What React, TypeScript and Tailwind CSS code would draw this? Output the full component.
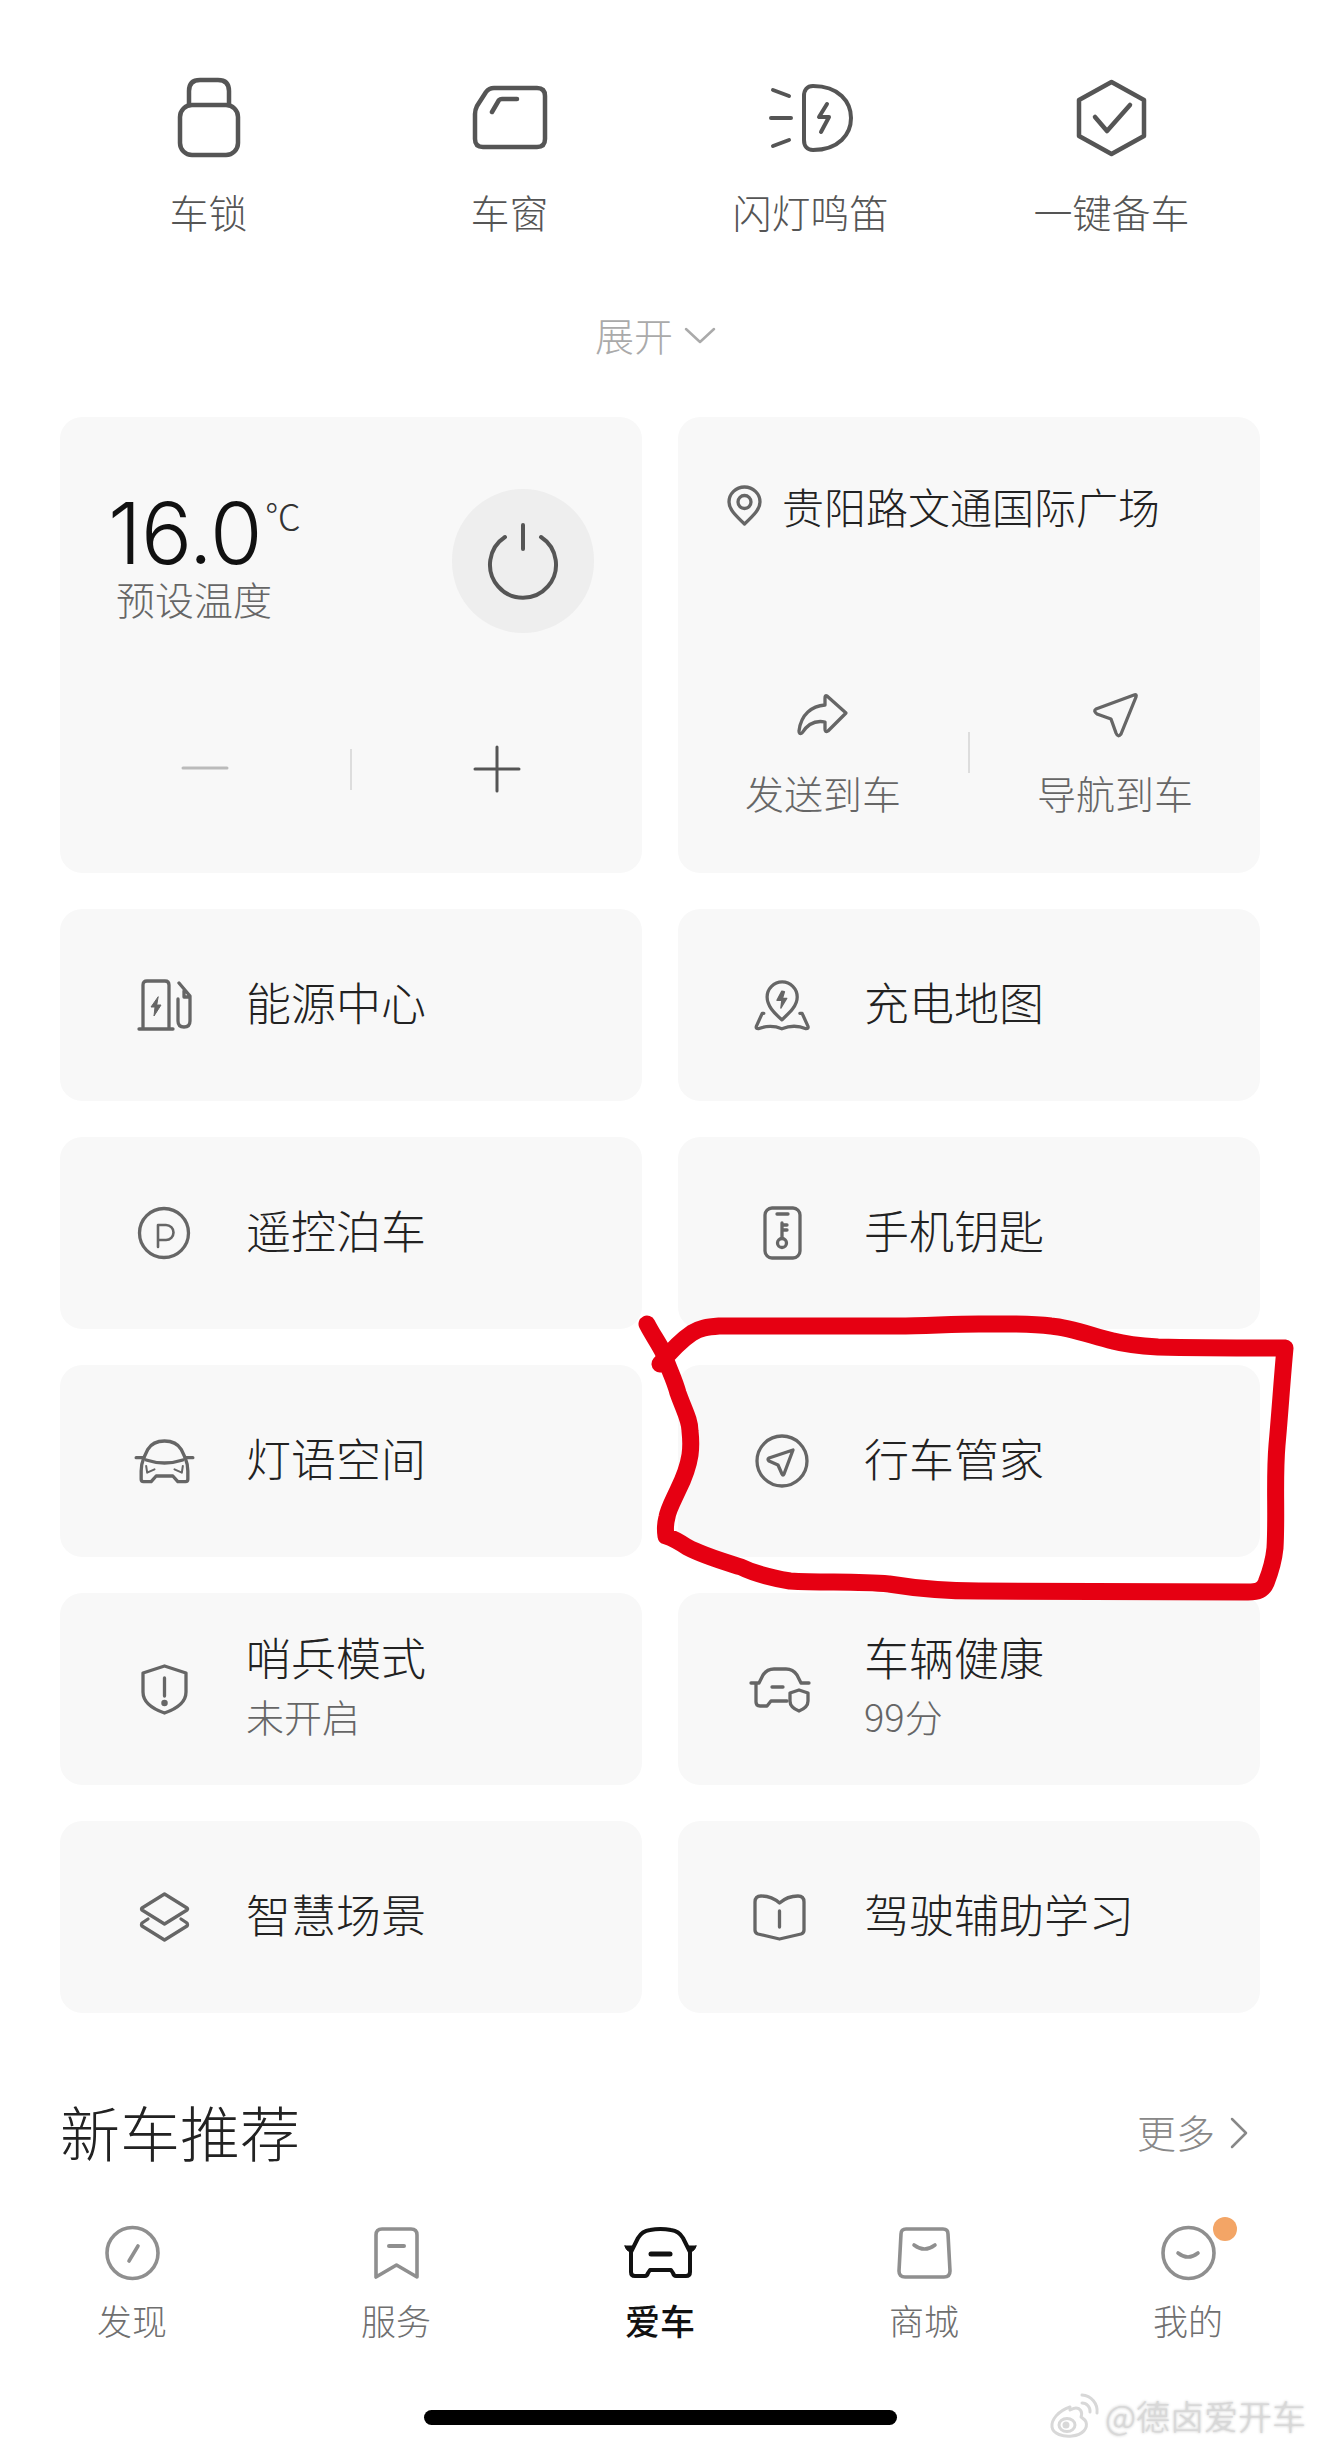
import type { ReactNode } from "react";

const Ico = ({ w, h, sw = 3.3, vb, children }: { w: number; h: number; sw?: number; vb?: string; children: ReactNode }) => (
  <svg
    width={w}
    height={h}
    viewBox={vb ?? `0 0 ${w} ${h}`}
    fill="none"
    stroke="currentColor"
    strokeWidth={sw}
    strokeLinecap="round"
    strokeLinejoin="round"
    className="block shrink-0 overflow-visible"
  >
    {children}
  </svg>
);

// --- top quick actions ---
const quick = [
  {
    label: "车锁",
    icon: (
      <Ico w={62} h={79} sw={4.5}>
        <path d="M11 27V13Q11 2 22 2H40Q51 2 51 13V27" />
        <rect x="2" y="27" width="58" height="50" rx="12" />
      </Ico>
    ),
  },
  {
    label: "车窗",
    icon: (
      <Ico w={74} h={63} sw={4.5}>
        <path d="M21 2H64Q72 2 72 10V53Q72 61 64 61H10Q2 61 2 53V28Q2 24 4 20L13 6Q16 2 21 2Z" />
        <path d="M19 26L26 14Q27 13 29 13H44" />
      </Ico>
    ),
  },
  {
    label: "闪灯鸣笛",
    icon: (
      <Ico w={84} h={68} sw={4}>
        <path d="M44 2C70 2 82 18 82 34C82 50 70 66 44 66C38 66 35 62 35 56V12C35 6 38 2 44 2Z" />
        <path d="M4 6L20 12M2 34H22M4 62L20 56" />
        <path d="M58 20L50 33H60L52 48" />
      </Ico>
    ),
  },
  {
    label: "一键备车",
    icon: (
      <Ico w={69} h={76} sw={4.5}>
        <path d="M34.5 2L67 20V56L34.5 74L2 56V20Z" />
        <path d="M18 37L30 51L53 25" />
      </Ico>
    ),
  },
];

// --- feature cards ---
const rows: { title: string; sub?: string; icon: ReactNode }[] = [
  {
    title: "能源中心",
    icon: (
      <Ico w={53} h={52}>
        <path d="M5 50V6Q5 2 9 2H27Q31 2 31 6V50M1 50H35" />
        <path d="M20 18L13 28H17L16 37L23 26H19Z" fill="currentColor" strokeWidth={1} />
        <path d="M41 4L52 17V42Q52 48 46 48Q40 48 40 42V20M46 12V18H52" />
      </Ico>
    ),
  },
  {
    title: "充电地图",
    icon: (
      <Ico w={54} h={49} vb="68 60 165 148" sw={10}>
        <path d="M150 178C125 155 105 135 105 108A46 46 0 0 1 197 108C197 135 175 155 150 178Z" />
        <path d="M150 90L135 118H150L147 142L165 112H152L158 92Z" fill="currentColor" strokeWidth={4} />
        <path d="M95 158H90L72 198Q70 205 78 205C105 195 125 195 150 205C175 195 200 195 224 205Q232 205 230 198L212 158H205" />
      </Ico>
    ),
  },
  {
    title: "遥控泊车",
    icon: (
      <Ico w={52} h={52}>
        <circle cx="26" cy="26" r="24.5" />
        <path d="M20 40V18H28A7.5 7.5 0 0 1 28 33H20" strokeWidth={2.6} />
      </Ico>
    ),
  },
  {
    title: "手机钥匙",
    icon: (
      <Ico w={39} h={54}>
        <rect x="2" y="2" width="35" height="50" rx="7" />
        <path d="M14 8H25M19 32V17M19 19H24M19 24H24" />
        <circle cx="19" cy="37" r="4.5" />
      </Ico>
    ),
  },
  {
    title: "灯语空间",
    icon: (
      <Ico w={57} h={42} vb="45 72 170 126" sw={10}>
        <path d="M68 125C62 140 60 150 60 165V190Q60 197 67 197H90L105 180H155L170 197H193Q200 197 200 190V165C200 150 198 140 192 125L180 100Q165 75 130 75Q95 75 80 100Z" />
        <path d="M45 125H68M192 125H215M75 132Q130 150 185 132" />
        <path d="M75 150L78 170L100 160M185 150L182 170L160 160" strokeWidth={6} />
      </Ico>
    ),
  },
  {
    title: "行车管家",
    icon: (
      <Ico w={54} h={54}>
        <circle cx="27" cy="27" r="25" />
        <path d="M38 16L29 40Q28 42 27 40L23 31L14 27Q12 25 14 24Z" />
      </Ico>
    ),
  },
  {
    title: "哨兵模式",
    sub: "未开启",
    icon: (
      <Ico w={47} h={51}>
        <path d="M23.5 2L45 9V28C45 38 35 45 23.5 49C12 45 2 38 2 28V9Z" />
        <path d="M23.5 14V32" />
        <circle cx="23.5" cy="39" r="1.6" fill="currentColor" />
      </Ico>
    ),
  },
  {
    title: "车辆健康",
    sub: "99分",
    icon: (
      <Ico w={59} h={45} vb="3 0 59 45">
        <path d="M9 16L13 8Q17 2 24 2H36Q43 2 47 8L51 16M1 16H9M51 16H59" />
        <path d="M6 17V35Q6 39 10 39H17L21 34H37M22 20H33" />
        <path d="M49 23L58 26V34C58 39 54 42 49 44C44 42 40 39 40 34V26Z" />
      </Ico>
    ),
  },
  {
    title: "智慧场景",
    icon: (
      <Ico w={49} h={50}>
        <path d="M24.5 2L47 16Q48 17 47 18L24.5 32L2 18Q1 17 2 16Z" />
        <path d="M8 27L2 31Q1 33 2 34L24.5 48L47 34Q48 33 47 31L41 27" />
      </Ico>
    ),
  },
  {
    title: "驾驶辅助学习",
    icon: (
      <Ico w={53} h={46} vb="3 0 53 46">
        <path d="M2 8Q2 2 8 2C15 2 22 5 26.5 9C31 5 38 2 45 2Q51 2 51 8V36Q51 39 48 40L26.5 45L5 40Q2 39 2 36Z" />
        <path d="M26.5 17V33" />
      </Ico>
    ),
  },
];

const tabs = [
  {
    label: "发现",
    icon: (
      <Ico w={55} h={54} sw={3.6}>
        <circle cx="27.5" cy="27" r="25.5" />
        <path d="M33 20L24 35" />
      </Ico>
    ),
  },
  {
    label: "服务",
    icon: (
      <Ico w={45} h={52} sw={3.6}>
        <path d="M2 50V8Q2 2 8 2H37Q43 2 43 8V50L22.5 38Z" />
        <path d="M15 19H30" strokeWidth={4} />
      </Ico>
    ),
  },
  {
    label: "爱车",
    active: true,
    icon: (
      <Ico w={71} h={50} sw={4}>
        <path d="M6 24V44Q6 48 10 48H20Q22 48 23 45L25 42H46L48 45Q49 48 51 48H61Q65 48 65 44V24L58 10Q54 3 46 2Q35.5 0 25 2Q17 3 13 10Z" />
        <path d="M0 18H7L6 24Q1 23 0 18ZM71 18H64L65 24Q70 23 71 18Z" fill="currentColor" strokeWidth={1} />
        <path d="M26 26H45" strokeWidth={5} />
      </Ico>
    ),
  },
  {
    label: "商城",
    icon: (
      <Ico w={53} h={52} sw={3.6}>
        <path d="M8 2H45Q50 2 50 7L52 44Q52 50 46 50H7Q1 50 1 44L3 7Q3 2 8 2Z" />
        <path d="M16 18Q26.5 26 37 18" />
      </Ico>
    ),
  },
  {
    label: "我的",
    dot: true,
    icon: (
      <Ico w={55} h={54} sw={3.6}>
        <circle cx="27.5" cy="27" r="25.5" />
        <path d="M17 27Q27 35 37 27" />
      </Ico>
    ),
  },
];

const Row = ({ title, sub, icon }: { title: string; sub?: string; icon: ReactNode }) => (
  <div className="flex h-[192px] items-center rounded-[22px] bg-[#f8f8f8] pl-[76px]">
    <div className="flex w-[56px] justify-center text-[#666666]">{icon}</div>
    <div className="ml-[54px] pb-[6px]">
      <div className="text-[45px] leading-[60px] text-[#222222]">{title}</div>
      {sub && <div className="text-[38px] leading-[58px] text-[#666666]">{sub}</div>}
    </div>
  </div>
);

export default function App() {
  return (
    <div className="relative h-[2448px] w-[1320px] overflow-hidden bg-white font-['Noto_Sans_CJK_SC','Noto_Sans',sans-serif] font-light">
      {/* QUICK ACTIONS */}
      <div className="grid grid-cols-4 px-[58px] pt-[78px]">
        {quick.map((q) => (
          <div key={q.label} className="flex flex-col items-center">
            <div className="flex h-[79px] items-center text-[#555555]">{q.icon}</div>
            <div className="mt-[31px] text-[39px] leading-[46px] text-[#555555]">{q.label}</div>
          </div>
        ))}
      </div>

      <div className="mt-[77px] flex items-center justify-center gap-[12px] pr-[10px] text-[#aaaaaa]">
        <span className="text-[39px] leading-[46px]">展开</span>
        <div className="mt-[3px]">
          <Ico w={30} h={15} sw={2.5}>
            <path d="M1 1L15 14L29 1" />
          </Ico>
        </div>
      </div>

      {/* CONTROL CARDS */}
      <div className="mt-[60px] grid grid-cols-2 gap-[36px] px-[60px]">
        <div className="flex h-[456px] flex-col rounded-[22px] bg-[#f8f8f8] pb-[82px]">
          <div className="flex items-start justify-between pl-[48px] pr-[48px] pt-[72px]">
            <div className="pt-[14px]">
              <div className="flex items-start">
                <span className="font-['Inter',sans-serif] text-[85px] font-light leading-[62px] tracking-[-0.5px] text-[#111111]">16.0</span>
                <span className="ml-[3px] mt-[-8px] text-[36px] leading-[40px] text-[#333333]">℃</span>
              </div>
              <div className="ml-[8px] mt-[10px] text-[39px] leading-[46px] text-[#666666]">预设温度</div>
            </div>
            <div className="flex h-[144px] w-[142px] items-center justify-center rounded-full bg-[#eeeeee] text-[#555555]">
              <Ico w={70} h={76} sw={4}>
                <path d="M35 2V26" />
                <path d="M17 14A33 33 0 1 0 53 14" />
              </Ico>
            </div>
          </div>
          <div className="mt-auto flex items-center">
            <div className="flex flex-1 justify-center text-[#bbbbbb]">
              <Ico w={46} h={44} sw={3}>
                <path d="M1 21H45" />
              </Ico>
            </div>
            <div className="h-[41px] w-[2px] bg-[#dddddd]" />
            <div className="flex flex-1 justify-center text-[#555555]">
              <Ico w={46} h={44} sw={3}>
                <path d="M1 22H45M23 0V44" />
              </Ico>
            </div>
          </div>
        </div>

        <div className="flex h-[456px] flex-col rounded-[22px] bg-[#f8f8f8] pb-[58px]">
          <div className="flex items-center gap-[20px] pl-[49px] pt-[69px]">
            <div className="text-[#666666]">
              <Ico w={35} h={40}>
                <path d="M17.5 38C8 29 2 23 2 16A15.5 15 0 0 1 33 16C33 23 27 29 17.5 38Z" />
                <circle cx="17.5" cy="16" r="6.5" />
              </Ico>
            </div>
            <div className="text-[42px] leading-[40px] text-[#222222]">贵阳路文通国际广场</div>
          </div>
          <div className="mt-auto flex items-center">
            <div className="flex flex-1 flex-col items-center">
              <div className="flex h-[45px] items-center text-[#666666]">
                <Ico w={50} h={41}>
                  <path d="M29 2L48 19L30 37Q27 39 27 35V28C17 26 9 31 4 39Q1 41 1 37C3 20 14 12 27 11V4Q27 1 29 2Z" />
                </Ico>
              </div>
              <div className="mt-[32px] text-[39px] leading-[46px] text-[#666666]">发送到车</div>
            </div>
            <div className="mt-[-2px] h-[41px] w-[2px] bg-[#dddddd]" />
            <div className="flex flex-1 flex-col items-center">
              <div className="flex h-[45px] items-center text-[#666666]">
                <Ico w={44} h={44}>
                  <path d="M41 2Q44 1 43 4L28 41Q25 45 23 40L18 26L4 21Q0 18 3 16Z" />
                </Ico>
              </div>
              <div className="mt-[32px] text-[39px] leading-[46px] text-[#666666]">导航到车</div>
            </div>
          </div>
        </div>

        {rows.map((r) => (
          <Row key={r.title} {...r} />
        ))}
      </div>

      {/* NEW CARS */}
      <div className="mt-[83px] flex items-center justify-between pl-[60px] pr-[73px]">
        <div className="text-[60px] leading-[70px] text-[#222222]">新车推荐</div>
        <div className="flex items-center gap-[16px] text-[#888888]">
          <span className="text-[39px] leading-[46px]">更多</span>
          <div className="mt-[3px]">
            <Ico w={16} h={30} sw={2.5}>
              <path d="M1 1L15 15L1 29" />
            </Ico>
          </div>
        </div>
      </div>

      {/* TAB BAR */}
      <div className="mt-[60px] grid grid-cols-5">
        {tabs.map((t) => (
          <div key={t.label} className="flex flex-col items-center">
            <div className={`relative flex h-[54px] items-center ${t.active ? "text-[#111111]" : "text-[#8f8f8f]"}`}>
              {t.icon}
              {t.dot && <span className="absolute right-[-21px] top-[-9px] h-[24px] w-[24px] rounded-full bg-[#f3a566]" />}
            </div>
            <div className={`mt-[20px] text-[35px] leading-[40px] ${t.active ? "font-medium text-[#111111]" : "text-[#6f6f6f]"}`}>{t.label}</div>
          </div>
        ))}
      </div>

      <div className="mx-auto mt-[70px] h-[15px] w-[473px] rounded-full bg-black" />

      {/* WATERMARK */}
      <div className="absolute left-[1050px] top-[2393px] flex items-center gap-[7px] text-[#d8d8d8]">
        <Ico w={48} h={45} sw={3}>
          <path d="M20 14C8 18 1 27 2 34C3 41 13 44 22 43C33 42 38 35 36 29C35 26 32 25 31 24C33 19 30 15 26 15C24 15 22 16 20 17" />
          <ellipse cx="17" cy="32" rx="8" ry="6.5" />
          <circle cx="16" cy="32" r="2" fill="currentColor" />
          <path d="M32 10A8 8 0 0 1 40 19M32 2A16 16 0 0 1 47 20" />
        </Ico>
        <span className="text-[34px] leading-[45px] [text-shadow:0_0_3px_#bbbbbb]">@德卤爱开车</span>
      </div>

      {/* RED ANNOTATION */}
      <svg className="pointer-events-none absolute left-0 top-0" width={1320} height={2448} fill="none">
        <path
          d="M647 1324C652 1334 658 1342 663 1352C668 1368 674 1378 678 1393C684 1410 690 1420 690 1431C691 1440 691 1448 690 1455C688 1468 684 1478 678 1490C672 1503 668 1510 667 1517C665 1525 665 1530 666 1536C672 1538 678 1541 687 1547C704 1556 722 1561 741 1567C755 1574 772 1578 790 1581C822 1583 856 1581 889 1584C920 1589 948 1591 979 1591C1068 1592 1158 1592 1248 1592C1258 1592 1263 1590 1266 1583C1272 1568 1274 1558 1275 1548C1277 1513 1274 1480 1277 1445C1280 1412 1282 1380 1285 1348C1245 1348 1200 1348 1158 1347C1142 1346 1128 1345 1113 1341C1092 1336 1072 1328 1051 1326C1028 1323 1003 1324 979 1324C952 1324 925 1326 898 1326C838 1326 778 1326 719 1326C707 1327 700 1328 692 1333C680 1341 670 1352 660 1364"
          stroke="#e60012"
          strokeWidth={17}
          strokeLinecap="round"
          strokeLinejoin="round"
        />
      </svg>
    </div>
  );
}
